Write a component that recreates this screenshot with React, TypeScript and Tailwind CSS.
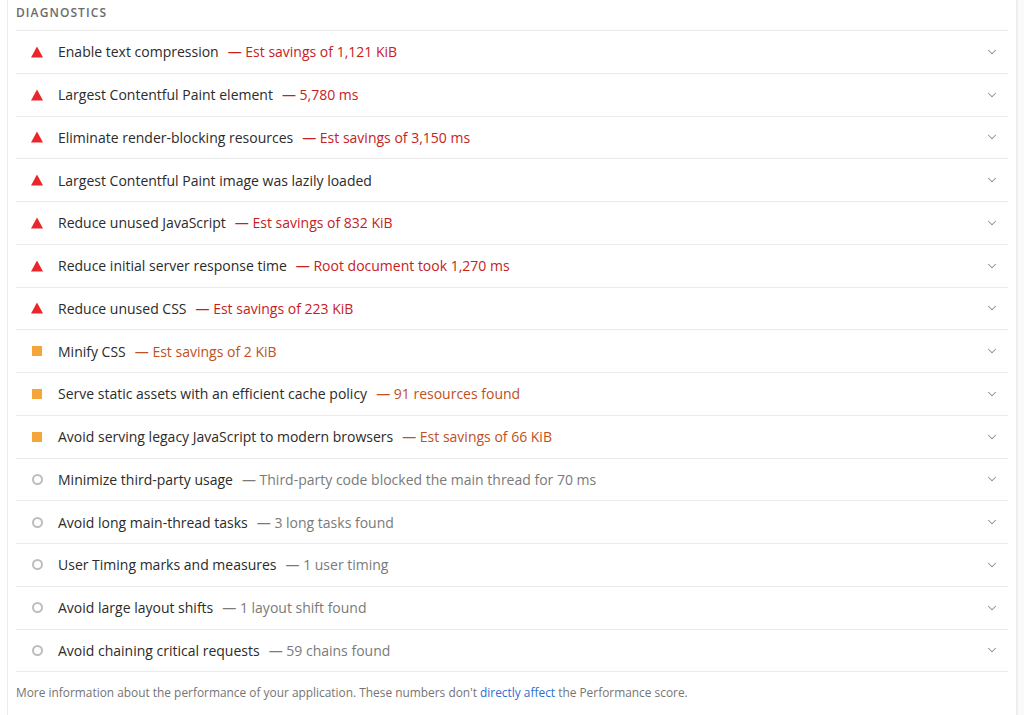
import React from "react";
import { ChevronDown } from "lucide-react";

type Level = "fail" | "average" | "info";

interface Audit {
  title: string;
  detail: string;
  level: Level;
}

const AUDITS: Audit[] = [
  { title: "Enable text compression", detail: "Est savings of 1,121 KiB", level: "fail" },
  { title: "Largest Contentful Paint element", detail: "5,780 ms", level: "fail" },
  { title: "Eliminate render-blocking resources", detail: "Est savings of 3,150 ms", level: "fail" },
  { title: "Largest Contentful Paint image was lazily loaded", detail: "", level: "fail" },
  { title: "Reduce unused JavaScript", detail: "Est savings of 832 KiB", level: "fail" },
  { title: "Reduce initial server response time", detail: "Root document took 1,270 ms", level: "fail" },
  { title: "Reduce unused CSS", detail: "Est savings of 223 KiB", level: "fail" },
  { title: "Minify CSS", detail: "Est savings of 2 KiB", level: "average" },
  { title: "Serve static assets with an efficient cache policy", detail: "91 resources found", level: "average" },
  { title: "Avoid serving legacy JavaScript to modern browsers", detail: "Est savings of 66 KiB", level: "average" },
  { title: "Minimize third-party usage", detail: "Third-party code blocked the main thread for 70 ms", level: "info" },
  { title: "Avoid long main-thread tasks", detail: "3 long tasks found", level: "info" },
  { title: "User Timing marks and measures", detail: "1 user timing", level: "info" },
  { title: "Avoid large layout shifts", detail: "1 layout shift found", level: "info" },
  { title: "Avoid chaining critical requests", detail: "59 chains found", level: "info" },
];

const DETAIL_COLOR: Record<Level, string> = {
  fail: "text-[#c5221f]",
  average: "text-[#c0501e]",
  info: "text-[#7a7a7a]",
};

function StatusIcon({ level }: { level: Level }) {
  if (level === "fail") {
    return (
      <svg width="12" height="12" viewBox="0 0 12 12" className="shrink-0">
        <polygon points="6,0.5 12,11.5 0,11.5" fill="#e8262b" />
      </svg>
    );
  }
  if (level === "average") {
    return <span className="block w-[10px] h-[10px] bg-[#f5a63b] shrink-0" />;
  }
  return <span className="block w-[11px] h-[11px] rounded-full border-2 border-[#bdbdbd] shrink-0" />;
}

export default function App() {
  return (
    <div className="min-h-[715px] bg-white flex" style={{ fontFamily: '"Open Sans", "Noto Sans", sans-serif' }}>
      <div className="ml-[7px] w-[1010px] border-l border-r border-[#ececec] px-[8px]">
        <div className="pt-[4px] pb-[8px] text-[12px] font-semibold tracking-[0.09em] text-[#6b6b6b]">
          DIAGNOSTICS
        </div>
        <div className="border-t border-[#ebebeb]">
          {AUDITS.map((a) => (
            <div key={a.title} className="h-[42.75px] flex items-center border-b border-[#ebebeb] pl-[15px] pr-[9px]">
              <div className="w-[12px] flex justify-center">
                <StatusIcon level={a.level} />
              </div>
              <div className="ml-[15px] flex-1 text-[14px] text-[#2b2b2b] whitespace-nowrap">
                {a.title}
                {a.detail && <span className={`ml-[9px] ${DETAIL_COLOR[a.level]}`}>— {a.detail}</span>}
              </div>
              <ChevronDown className="w-[14px] h-[14px] text-[#8a8a8a]" strokeWidth={1.75} />
            </div>
          ))}
        </div>
        <p className="pt-[12px] text-[11.9px] text-[#757575]">
          More information about the performance of your application. These numbers don't{" "}
          <span className="text-[#2f6fcf]">directly affect</span> the Performance score.
        </p>
      </div>
      <div className="flex-1 bg-[#fafafa] border-l border-[#efefef]" />
    </div>
  );
}
